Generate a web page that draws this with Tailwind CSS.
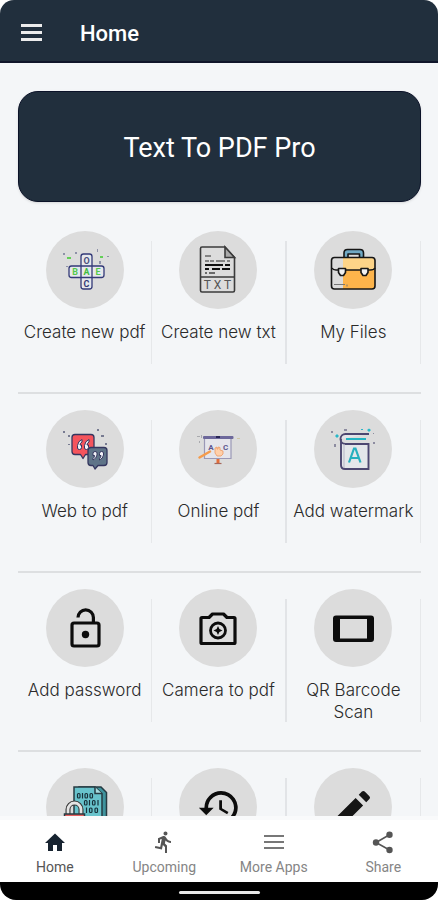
<!DOCTYPE html>
<html lang="en">
<head>
<meta charset="utf-8">
<meta name="viewport" content="width=device-width, initial-scale=1">
<title>Text To PDF Pro</title>
<script src="https://cdn.jsdelivr.net/npm/@tailwindcss/browser@4"></script>
</head>
<body class="bg-white font-['Roboto',sans-serif]">
<div class="flex h-screen flex-col overflow-hidden">
  <header class="flex h-[63px] shrink-0 items-center gap-9 rounded-t-[14px] border-b-2 border-[#10162b] bg-[#212f3d] px-5 pt-1">
    <button type="button" aria-label="Open menu" class="text-[#ececec]">
      <svg class="h-5 w-6" viewBox="0 0 24 20" fill="currentColor"><path d="M1 1h21v3H1zM1 8h21v3H1zM1 15h21v3H1z"/></svg>
    </button>
    <h1 class="pt-0.5 text-[22px] leading-7 font-medium text-white">Home</h1>
  </header>

  <main class="min-h-0 flex-1 overflow-y-auto bg-[#f4f6f8] pt-7 pr-[17px] pl-[18px] [scrollbar-width:none]">
    <section class="flex h-[111px] items-center justify-center rounded-[20px] border border-[#0b1228] bg-[#212f3d] pt-0.5 shadow-sm">
      <h2 class="text-[27px] leading-8 text-white">Text To PDF Pro</h2>
    </section>

    <div class="mt-[13px] font-['Inter',sans-serif] text-[17px] leading-[22px] font-light text-[#2a2a2a]">
      <div class="grid h-[179px] grid-cols-3 border-b-2 border-[#dddfe1]">
        <div class="flex">
          <a href="#create-pdf" class="flex min-w-0 flex-1 flex-col items-center gap-3 pt-4 text-center">
            <span class="size-[78px] rounded-full bg-[#dcdcdc]">
              <svg viewBox="0 0 78 78" fill="none" stroke="#343a78" stroke-width="1.3">
                <rect x="35" y="23" width="11" height="35" rx="2.5" fill="#e6e8ec"/><rect x="23" y="35" width="35" height="11.500" rx="2.500" fill="#e6e8ec"/><path d="M35 35v11.500M46 35v11.500"/>
                <g stroke="none" font-family="Roboto" font-weight="700" font-size="9" text-anchor="middle"><text x="40.500" y="33" fill="#4b4f7c">O</text><text x="29" y="44" fill="#55c94c">B</text><text x="40.500" y="44" fill="#42bd3e">A</text><text x="52" y="44" fill="#55c94c">E</text><text x="40.500" y="56" fill="#343a78">C</text></g>
                <g stroke="none"><path fill="#63cf57" d="M21 26h4v2h-4zM54 25h3v2h-3z"/><path fill="#8e91a8" d="M17 22h2v2h-2zM29 21h2v2h-2zM51 18h1v3h-1zM53 30h2v3h-2zM61 25h2v1h-2zM20 35h2v1h-2z"/></g>
              </svg>
            </span>
            <span class="whitespace-nowrap">Create new pdf</span>
          </a>
          <span class="mt-[26px] mb-7 w-px bg-[#e6e8ea]"></span>
        </div>
        <div class="flex">
          <a href="#create-txt" class="flex min-w-0 flex-1 flex-col items-center gap-3 pt-4 text-center">
            <span class="size-[78px] rounded-full bg-[#dcdcdc]">
              <svg viewBox="0 0 78 78" fill="none" stroke="#3b3b3b" stroke-width="1.600">
                <path d="M23 16h23l9.500 10.500V59.500q0 1.500-1.500 1.500H23q-1.500 0-1.500-1.500V17.500Q21.500 16 23 16zM21.500 46h34"/><path d="M46 16v10.500h9.500z" fill="#aaa"/>
                <path d="M26 25h6M26 30h4m1 0h4m2 0h9m2 0h3" stroke="#666" stroke-width="1.500"/><path d="M26 34h18m2 0h5M26 38h4m3 0h8m2 0h8" stroke="#111" stroke-width="2"/><path d="M26 42h2m2 0h6" stroke="#444"/>
                <text x="38.500" y="58" font-family="Roboto" font-size="12" fill="#555" stroke="none" text-anchor="middle" font-weight="400">T X T</text>
              </svg>
            </span>
            <span class="whitespace-nowrap">Create new txt</span>
          </a>
          <span class="mt-[26px] mb-7 w-0.5 bg-[#e2e4e7]"></span>
        </div>
        <div class="flex">
          <a href="#my-files" class="flex min-w-0 flex-1 flex-col items-center gap-3 pt-4 text-center">
            <span class="size-[78px] rounded-full bg-[#dcdcdc]">
              <svg viewBox="0 0 78 78" fill="none" stroke="#161616" stroke-width="1.600" stroke-linejoin="round">
                <path d="M30 27v-5q0-3.500 3.500-3.500h12.500q3.500 0 3.500 3.500v5h-4v-4H34v4z" fill="#70a9c4"/>
                <path d="M29 27h29q3 0 3 3v9H29z" fill="#fdd488" stroke="none"/><path d="M29 39h32v16q0 3-3 3H29z" fill="#fdb44b" stroke="none"/>
                <rect x="17.500" y="26.500" width="43.500" height="31.500" rx="3"/><path d="M18 37q1 2 4 2h34q4 0 5-2"/><path d="M20 53.500h11m2 0v2" stroke="#777" stroke-width="1"/>
                <path d="M24.500 37.500h7v4l-2 3h-3l-2-3zM47 37.500h7v4l-2 3h-3l-2-3z" fill="#f1f1f1"/>
              </svg>
            </span>
            <span class="whitespace-nowrap">My Files</span>
          </a>
          <span class="mt-[26px] mb-7 w-px bg-[#e6e8ea]"></span>
        </div>
      </div>

      <div class="grid h-[179px] grid-cols-3 border-b-2 border-[#dddfe1]">
        <div class="flex">
          <a href="#web" class="flex min-w-0 flex-1 flex-col items-center gap-3 pt-4 text-center">
            <span class="size-[78px] rounded-full bg-[#dcdcdc]">
              <svg viewBox="0 0 78 78" fill="none" stroke="#34365f" stroke-width="1.300" stroke-linejoin="round">
                <path d="M29 24.500h16q3 0 3 3v14q0 3-3 3h-5.500L37 48.500l-2.500-4H29q-3 0-3-3v-14q0-3 3-3z" fill="#f5545c"/>
                <path d="M45 37.500h13q3 0 3 3v12q0 3-3 3h-6l-3 3.500-2-3.500h-2q-3 0-3-3v-12q0-3 3-3z" fill="#5f7488"/>
                <g fill="#f2f2f8" stroke-width="1"><path d="M36 29.500q-4 1.500-4.500 6v2.500q0 1.500 2 1.500t2-2v-2.500h-1.500q0-2 2-3zM43 29.500q-4 1.500-4.500 6v2.500q0 1.500 2 1.500t2-2v-2.500H41q0-2 2-3z"/><path d="M47 50q3.500-1.500 4-5v-2q0-1.500-2-1.500t-2 2v2h1.500q0 2-1.500 3zM53.500 50q3.500-1.500 4-5v-2q0-1.500-2-1.500t-2 2v2H55q0 2-1.500 3z"/></g>
                <path fill="#777b91" stroke="none" d="M17 21h2v2h-2zM22 25h2v2h-2zM51 19h2v2h-2zM55 25h3v2h-3zM59 33h2v2h-2zM22 34h2v1h-2z"/>
              </svg>
            </span>
            <span class="whitespace-nowrap">Web to pdf</span>
          </a>
          <span class="mt-[26px] mb-7 w-px bg-[#e6e8ea]"></span>
        </div>
        <div class="flex">
          <a href="#online" class="flex min-w-0 flex-1 flex-col items-center gap-3 pt-4 text-center">
            <span class="size-[78px] rounded-full bg-[#dcdcdc]">
              <svg viewBox="0 0 78 78" fill="none">
                <path d="M25.500 28v20.500h26.500V28" fill="#e5e5eb" stroke="#9a98b6" stroke-width="1.200"/><rect x="24" y="26" width="30.500" height="3" rx="1" fill="#6d689b"/><path d="M37 26h4v2h-4z" fill="#292657"/>
                <g font-family="Roboto" font-size="8" font-weight="700" text-anchor="middle" fill="#5c578e"><text x="32" y="40">A</text><text x="46.500" y="40">C</text></g>
                <path d="M36 38l2-1v2l1 0v-2l2 .500V40l3 1v3l-2 2h-4l-2-3z" fill="#ffd0aa" stroke="#ee9963" stroke-width=".8"/>
                <path d="M20.500 47.500L31 41.500" stroke="#f59b4b" stroke-width="2.500" stroke-linecap="round"/><path d="M39 49v4" stroke="#e46e3a" stroke-width="3"/><path d="M35.500 53.500h7" stroke="#a5675a" stroke-width="1.200"/>
                <path fill="#a9aaae" d="M18 26h3v1h-3zM20 31h1v2h-1zM22 25h1v3h-1z"/><path fill="#cfc7a5" d="M58 28h3v1h-3z"/>
              </svg>
            </span>
            <span class="whitespace-nowrap">Online pdf</span>
          </a>
          <span class="mt-[26px] mb-7 w-0.5 bg-[#e2e4e7]"></span>
        </div>
        <div class="flex">
          <a href="#watermark" class="flex min-w-0 flex-1 flex-col items-center gap-3 pt-4 text-center">
            <span class="size-[78px] rounded-full bg-[#dcdcdc]">
              <svg viewBox="0 0 78 78" fill="none" stroke="#4d4771" stroke-width="1.900">
                <path d="M55 24H31.500a5 5 0 0 0 0 10H54.500V59H31q-4 0-4-4V29" fill="#e4e6ea"/><path d="M30 34v24" stroke="#b6b5c5" stroke-width="1"/><path d="M32 29h20" stroke="#23b4c3" stroke-width="2"/>
                <path d="M35 52.500l5-14h1.500l5 14M37 48h7.500" stroke="#27b0be" stroke-width="2.200"/>
                <path fill="#28b7c8" stroke="none" d="M21 26l2-2 2 2-2 2zM53 20l2-1.500 2 1.500-2 2zM47 19h2v1h-2z"/><path fill="#8d8ca0" stroke="none" d="M17 21h2v2h-2zM30 19h3v2h-3zM20 34h2v3h-2zM59 32h2v2h-2zM59 23h1v1h-1z"/>
              </svg>
            </span>
            <span class="whitespace-nowrap">Add watermark</span>
          </a>
          <span class="mt-[26px] mb-7 w-px bg-[#e6e8ea]"></span>
        </div>
      </div>

      <div class="grid h-[179px] grid-cols-3 border-b-2 border-[#dddfe1]">
        <div class="flex">
          <a href="#password" class="flex min-w-0 flex-1 flex-col items-center gap-3 pt-4 text-center">
            <span class="size-[78px] rounded-full bg-[#dcdcdc]">
              <svg viewBox="0 0 78 78" fill="none" stroke="#0c0c0c" stroke-width="3.200">
                <rect x="26" y="34" width="27" height="23" rx="2"/><path d="M32 28.500a7.700 7.700 0 0 1 15.400 0V34"/><circle cx="39.500" cy="45.500" r="3.700" fill="#0c0c0c" stroke="none"/>
              </svg>
            </span>
            <span class="whitespace-nowrap">Add password</span>
          </a>
          <span class="mt-[26px] mb-7 w-px bg-[#e6e8ea]"></span>
        </div>
        <div class="flex">
          <a href="#camera" class="flex min-w-0 flex-1 flex-col items-center gap-3 pt-4 text-center">
            <span class="size-[78px] rounded-full bg-[#dcdcdc]">
              <svg viewBox="0 0 78 78" fill="none" stroke="#0c0c0c" stroke-width="3.200" stroke-linejoin="round">
                <path d="M23 28.500h7l3.500-3.500h11l3.500 3.500h7q1 0 1 1v24q0 1-1 1H23q-1 0-1-1v-24q0-1 1-1z"/><circle cx="39" cy="41.500" r="7.500" stroke-width="2.800"/><path d="M39 37l1.400 3.100 3.100 1.400-3.100 1.400L39 46l-1.400-3.100-3.100-1.400 3.100-1.400z" fill="#0c0c0c" stroke="none"/>
              </svg>
            </span>
            <span class="whitespace-nowrap">Camera to pdf</span>
          </a>
          <span class="mt-[26px] mb-7 w-0.5 bg-[#e2e4e7]"></span>
        </div>
        <div class="flex">
          <a href="#scan" class="flex min-w-0 flex-1 flex-col items-center gap-3 pt-4 text-center">
            <span class="size-[78px] rounded-full bg-[#dcdcdc]">
              <svg viewBox="0 0 78 78"><path fill="#0c0c0c" fill-rule="evenodd" d="M22 26.500h35q3 0 3 3v20.500q0 3-3 3H22q-3 0-3-3V29.500q0-3 3-3zM26 30v19.500h27V30z"/></svg>
            </span>
            <span class="px-4">QR Barcode Scan</span>
          </a>
          <span class="mt-[26px] mb-7 w-px bg-[#e6e8ea]"></span>
        </div>
      </div>

      <div class="grid h-[179px] grid-cols-3">
        <div class="flex">
          <a href="#encrypt" aria-label="Encrypt" class="flex min-w-0 flex-1 flex-col items-center pt-4">
            <span class="size-[78px] rounded-full bg-[#dcdcdc]">
              <svg viewBox="0 0 78 78" fill="none" stroke="#263b42" stroke-width="1.500">
                <path d="M33 19h22l5.500 5.500V62H33z" fill="#3f939d"/><path d="M28 19h21l7 6.500V60H28z" fill="#68c3cc"/><path d="M49 19v6.500h7" fill="#a7dde1"/>
                <g fill="none" stroke="#17313a" stroke-width="1.200"><rect x="31.500" y="25.500" width="2.500" height="4.500" rx="1"/><path d="M36.500 25v5.500"/><rect x="39" y="25.500" width="2.500" height="4.500" rx="1"/><rect x="44" y="25.500" width="2.500" height="4.500" rx="1"/><rect x="38.500" y="32.500" width="2.500" height="4.500" rx="1"/><path d="M43.500 32v5.500"/><rect x="46.500" y="32.500" width="2.500" height="4.500" rx="1"/><path d="M52 32v5.500M40.500 39.500V45"/><rect x="43.500" y="40" width="2.500" height="4.500" rx="1"/><rect x="49" y="40" width="2.500" height="4.500" rx="1"/></g>
                <path d="M22 47v-5.500a6.500 6.500 0 0 1 13 0V47" stroke="#353535" stroke-width="5"/><path d="M22 47v-5.500a6.500 6.500 0 0 1 13 0V47" stroke="#e4e4e4" stroke-width="2.800"/><rect x="18.500" y="46" width="20" height="15" fill="#e65e5e"/>
              </svg>
            </span>
          </a>
          <span class="mt-[26px] mb-7 w-px bg-[#e6e8ea]"></span>
        </div>
        <div class="flex">
          <a href="#history" aria-label="History" class="flex min-w-0 flex-1 flex-col items-center pt-4">
            <span class="size-[78px] rounded-full bg-[#dcdcdc]">
              <svg viewBox="0 0 78 78" fill="#0c0c0c"><path transform="translate(18 17.500) scale(1.850)" d="M13 3a9 9 0 0 0-9 9H1l3.890 3.890.07.14L9 12H6a7 7 0 1 1 2.060 4.940l-1.420 1.420A9 9 0 1 0 13 3zm-1 5v5l4.280 2.540.72-1.210-3.500-2.080V8z"/></svg>
            </span>
          </a>
          <span class="mt-[26px] mb-7 w-0.5 bg-[#e2e4e7]"></span>
        </div>
        <div class="flex">
          <a href="#edit" aria-label="Edit" class="flex min-w-0 flex-1 flex-col items-center pt-4">
            <span class="size-[78px] rounded-full bg-[#dcdcdc]">
              <svg viewBox="0 0 78 78" fill="#151515"><path transform="translate(14 17)" d="M6 34.500V42h7.500L35.120 20.380l-7.500-7.500zM41.410 14.090a2 2 0 0 0 0-2.820L36.730 6.590a2 2 0 0 0-2.820 0L30.740 9.750l7.500 7.500z"/></svg>
            </span>
          </a>
          <span class="mt-[26px] mb-7 w-px bg-[#e6e8ea]"></span>
        </div>
      </div>
    </div>
  </main>

  <nav class="grid h-[66px] shrink-0 grid-cols-4 border-t-4 border-[#f9fafb] bg-white pt-2.5 text-sm leading-4 text-[#858585]">
    <a href="#home" class="flex flex-col items-center gap-[5px] text-[#555]">
      <svg class="size-6 text-[#172330]" viewBox="0 0 24 24" fill="currentColor"><path d="M10 21v-6h4v6h5v-8h3L12 3.500 2 13h3v8z"/></svg>
      <span>Home</span>
    </a>
    <a href="#upcoming" class="flex flex-col items-center gap-[5px]">
      <svg class="size-6 text-[#555]" viewBox="0 0 24 24" fill="currentColor"><path d="M13.490 5.480c1.100 0 2-.9 2-2s-.9-2-2-2-2 .9-2 2 .9 2 2 2zm-3.600 13.900l1-4.400 2.100 2v6h2v-7.500l-2.100-2 .6-3c1.300 1.500 3.300 2.500 5.500 2.500v-2c-1.900 0-3.500-1-4.300-2.400l-1-1.600c-.4-.6-1-1-1.700-1-.3 0-.5.1-.8.1l-5.200 2.200v4.700h2v-3.400l1.800-.7-1.600 8.100-4.900-1-.4 2z"/></svg>
      <span>Upcoming</span>
    </a>
    <a href="#more" class="flex flex-col items-center gap-[5px]">
      <svg class="size-6 text-[#777]" viewBox="0 0 24 24" fill="currentColor"><path d="M2 5h20v2H2zM2 11h20v2H2zM2 17h20v2H2z"/></svg>
      <span>More Apps</span>
    </a>
    <a href="#share" class="flex flex-col items-center gap-[5px]">
      <svg class="size-6 text-[#555]" viewBox="0 0 24 24" fill="currentColor"><circle cx="5" cy="12.500" r="3.200"/><circle cx="18.500" cy="4.800" r="3.200"/><circle cx="18.500" cy="20" r="3.200"/><path d="M18.500 4.800L5 12.500 18.500 20" fill="none" stroke="currentColor" stroke-width="1.600"/></svg>
      <span>Share</span>
    </a>
  </nav>
  <footer class="flex h-[18px] shrink-0 items-center justify-center rounded-b-[16px] bg-black pt-0.5">
    <span class="h-[3px] w-[81px] rounded-full bg-[#e8e8e8]"></span>
  </footer>
</div>
</body>
</html>
